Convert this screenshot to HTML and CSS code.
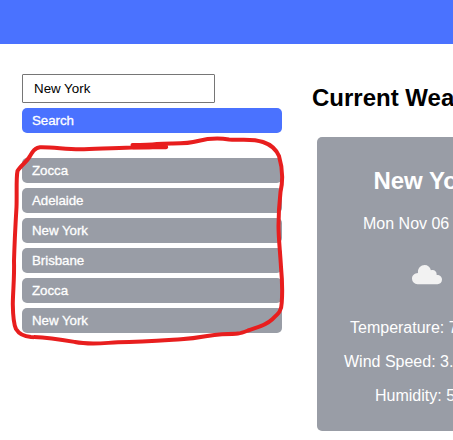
FILE: index.html
```html
<!DOCTYPE html>
<html lang="en">
<head>
<meta charset="utf-8">
<title>Weather</title>
<link rel="stylesheet" href="styles.css">
</head>
<body>
<header class="banner"></header>
<main class="layout">
  <aside class="sidebar">
    <input class="city-input" type="text" value="New York">
    <button class="btn search">Search</button>
    <div class="history">
      <button class="btn">Zocca</button>
      <button class="btn">Adelaide</button>
      <button class="btn">New York</button>
      <button class="btn">Brisbane</button>
      <button class="btn">Zocca</button>
      <button class="btn">New York</button>
    </div>
  </aside>
  <section class="current">
    <h2 class="title">Current Weather</h2>
    <article class="card">
      <h2 class="city">New York</h2>
      <p class="date">Mon Nov 06</p>
      <svg class="cloud" width="30" height="20" viewBox="0 0 30 20"><path d="M5.500 19.200A5.500 5.500 0 0 1 0 13.600C0 10.500 2.500 8.300 6 8.100C5.400 3.500 8.600 0 12.600 0C15.700 0 18.200 2 18.900 5.300C22 4 25.200 6.500 24.600 10C27.800 9.800 30 11.900 30 14.500C30 17.300 28 19.200 25.400 19.200Z"/></svg>
      <p class="temperature">Temperature: 7</p>
      <p class="wind">Wind Speed: 3.</p>
      <p class="humidity">Humidity: 5</p>
    </article>
  </section>
</main>
<svg class="marker" width="453" height="440" viewBox="0 0 453 440">
  <path d="M166 146C155 147 145 147.500 132 147.500C111 148 95 149 80 149.300C64 149 52 147 40 147.300C35 148 33 151 30 156C27 162 20 166 17.500 171C16 178 17 193 16.500 207C15.500 224 14.500 243 14 261C14.500 277 13 290 12.800 304C13 318 14 325 16 329C19 334 24 336.500 31 337C47 337.300 60 339.500 75 342C90 345 103 343 118 342.300C142 342 162 340.500 181 339.300C203 338 207 335 222 334.200C239 334 239 334 248 330.500C258 327 265 326 272 319.500C279 313 281.500 311 281.700 303C282.500 293 282.300 281 281 267C280 250 278.500 238 278.500 226C278.500 211 279.500 201 280.500 192C283 181 282.300 167 279 156C276 149 269 144 263 142C252 138 240 140.500 229 139.500C216 137.500 206 139 198 141C184 145 170 142.500 157 144C149 145 140 145 132.500 145"/>
  <path d="M133 147.300H166"/>
</svg>
</body>
</html>
```
FILE: styles.css
```css
* { box-sizing: border-box; }
body {
  margin: 0;
  height: 440px;
  overflow: hidden;
  background: #fff;
  font-family: "Liberation Sans", Arial, sans-serif;
}
.banner { height: 44px; background: #4a72ff; }
.layout { display: flex; gap: 30px; padding: 30px 0 0 22px; }
.sidebar {
  flex: 0 0 260px;
  display: flex;
  flex-direction: column;
  align-items: flex-start;
  gap: 5px;
}
.city-input {
  width: 193px;
  height: 29px;
  padding: 0 11px;
  border: 1px solid #767676;
  border-radius: 1px;
  font: 13.333px "Liberation Sans", Arial, sans-serif;
  color: #000;
}
.btn {
  display: block;
  width: 260px;
  height: 25px;
  padding: 0 10px;
  border: 0;
  border-radius: 5px;
  background: #999da6;
  color: #fff;
  text-align: left;
  font: 13.333px/25px "Liberation Sans", Arial, sans-serif;
  letter-spacing: -0.05px;
  -webkit-text-stroke: 0.3px #fff;
}
.search { background: #4a72ff; }
.history { display: flex; flex-direction: column; gap: 5px; margin-top: 20px; }
.current { flex: 0 0 230px; padding-top: 10px; }
.title, .city { margin: 0; font-size: 24px; line-height: 28px; white-space: nowrap; }
.card {
  width: 220px;
  height: 294px;
  margin: 25px 0 0 5px;
  padding-top: 30px;
  border-radius: 5px;
  background: #999da6;
  color: #fff;
}
.city { text-align: center; }
.card p { margin: 0 0 16px; font-size: 16px; line-height: 18px; white-space: nowrap; }
.card .date { margin-top: 20px; padding-left: 46px; }
.cloud { display: block; margin: 32px 0 34px 95px; fill: #f2f2f2; }
.temperature { padding-left: 33px; }
.wind { padding-left: 27px; }
.humidity { padding-left: 58px; }
.marker {
  position: absolute;
  top: 0;
  left: 0;
  pointer-events: none;
  fill: none;
  stroke: #e81e1e;
  stroke-width: 4;
  stroke-linecap: round;
  stroke-linejoin: round;
}
```
